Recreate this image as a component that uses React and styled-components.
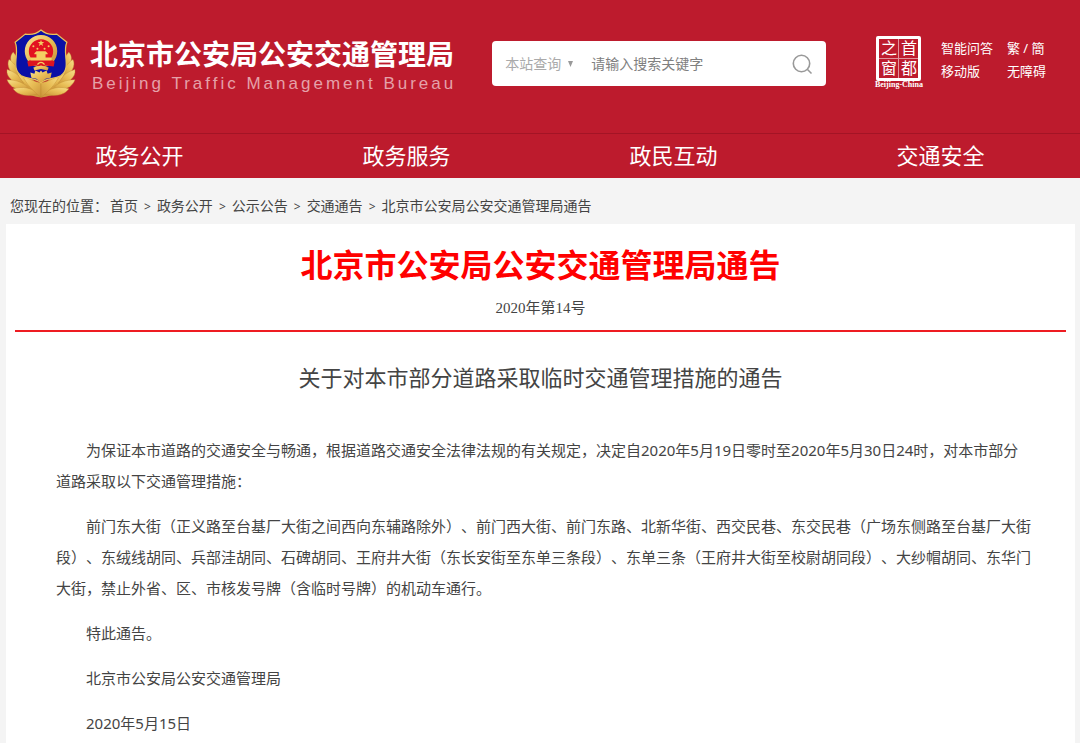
import styled, { createGlobalStyle } from "styled-components";

const GlobalStyle = createGlobalStyle`
* {
  box-sizing : border-box;
}
body {
  margin : 0;
  background-color : #f4f4f4;
  color : #444;
  font-family : "Noto Sans", "Noto Sans CJK SC", sans-serif;
  font-size : 14px;
  text-spacing-trim : space-all;
}
a {
  color : inherit;
  text-decoration : none;
}
`

// Header

const Header = styled.header`
background-color : #bd1b2d;
color : #fff;
`

const HeaderTop = styled.div`
display : flex;
align-items : center;
min-height : 133px;
padding : 0 34px 6px 6px;
@media only screen and (max-width : 860px){
  flex-wrap : wrap;
  row-gap : 12px;
  padding : 16px 6px;
}
`

const Brand = styled.a`
display : flex;
align-items : center;
column-gap : 14px;
`

const Emblem = styled.svg`
width : 70px;
height : 70px;
flex-shrink : 0;
`

const BrandText = styled.span`
padding-top : 4px;
`

const BrandName = styled.strong`
display : block;
font-size : 28px;
font-weight : 700;
line-height : 36px;
white-space : nowrap;
`

const BrandSub = styled.span`
display : block;
padding-left : 2px;
color : #e5a1a9;
font-family : "Liberation Sans", sans-serif;
font-size : 17px;
line-height : 24px;
letter-spacing : 3px;
white-space : nowrap;
`

const SearchForm = styled.form`
display : flex;
align-items : center;
flex : 0 1 330px;
height : 45px;
margin-left : 36px;
padding : 0 13px;
border-radius : 4px;
background-color : #fff;
`

const ScopeSelect = styled.select`
appearance : none;
width : 58px;
padding : 0;
border : 0;
background : none;
color : #aaa;
font-family : inherit;
font-size : 14px;
`

const ScopeArrow = styled.svg`
width : 7px;
height : 6px;
margin-left : 4px;
flex-shrink : 0;
`

const SearchInput = styled.input`
flex : 1;
min-width : 0;
margin-left : 17px;
padding : 0;
border : 0;
outline : 0;
background : none;
color : #444;
font-family : inherit;
font-size : 14px;
&::placeholder {
  color : #808080;
}
`

const SearchButton = styled.button`
display : flex;
padding : 0;
border : 0;
background : none;
cursor : pointer;
`

const Portal = styled.a`
display : flex;
flex-direction : column;
align-items : center;
margin-left : auto;
padding : 0 18px 2px 0;
`

const Seal = styled.span`
display : grid;
grid-template-columns : 1fr 1fr;
gap : 1px;
width : 45px;
height : 45px;
border : 3px solid #fff;
border-radius : 2px;
background-color : #e0939c;
`

const SealCell = styled.span`
background-color : #bd1b2d;
font-size : 16px;
line-height : 19px;
text-align : center;
`

const SealName = styled.span`
font-family : "Liberation Serif", serif;
font-size : 8px;
font-weight : 700;
line-height : 8px;
`

const QuickLinks = styled.nav`
display : grid;
grid-template-columns : auto auto;
column-gap : 14px;
padding-bottom : 7px;
font-size : 13px;
line-height : 23px;
white-space : nowrap;
`

const MainNav = styled.nav`
display : grid;
grid-template-columns : repeat(4, 1fr);
padding : 0 6px 2px;
border-top : 1px solid #a31425;
`

const NavLink = styled.a`
font-size : 22px;
line-height : 42px;
text-align : center;
`

// Content

const Breadcrumb = styled.nav`
display : flex;
flex-wrap : wrap;
column-gap : 2px;
padding : 11px 10px 0;
line-height : 34px;
`

const Crumbs = styled.ol`
display : flex;
flex-wrap : wrap;
margin : 0;
padding : 0;
list-style : none;
`

const Crumb = styled.li`
& + &::before {
  content : ">";
  padding : 0 6px;
  font-size : 12px;
}
`

const Article = styled.article`
margin : 0 5px 0 6px;
padding : 17px 9px 14px;
background-color : #fff;
`

const ArticleHead = styled.header`
padding-bottom : 12px;
border-bottom : 2px solid #ee1c22;
text-align : center;
`

const Title = styled.h1`
margin : 0;
color : #f00;
font-size : 32px;
font-weight : 700;
line-height : 48px;
`

const Issue = styled.p`
margin : 9px 0 0;
font-family : "Liberation Serif", "Noto Sans CJK SC", serif;
font-size : 15px;
line-height : 20px;
`

const Subject = styled.h2`
margin : 29px 0 42px;
font-size : 22px;
font-weight : 400;
line-height : 32px;
text-align : center;
`

const Content = styled.div`
padding : 0 34px 0 41px;
`

const Paragraph = styled.p`
margin : 0 0 14px;
font-size : 15px;
line-height : 31px;
text-indent : 2em;
`

const navItems = ["政务公开", "政务服务", "政民互动", "交通安全"];

const crumbs = ["首页", "政务公开", "公示公告", "交通通告", "北京市公安局公安交通管理局通告"];

const paragraphs = [
  "为保证本市道路的交通安全与畅通，根据道路交通安全法律法规的有关规定，决定自2020年5月19日零时至2020年5月30日24时，对本市部分道路采取以下交通管理措施：",
  "前门东大街（正义路至台基厂大街之间西向东辅路除外）、前门西大街、前门东路、北新华街、西交民巷、东交民巷（广场东侧路至台基厂大街段）、东绒线胡同、兵部洼胡同、石碑胡同、王府井大街（东长安街至东单三条段）、东单三条（王府井大街至校尉胡同段）、大纱帽胡同、东华门大街，禁止外省、区、市核发号牌（含临时号牌）的机动车通行。",
  "特此通告。",
  "北京市公安局公安交通管理局",
  "2020年5月15日",
];

const STAR = "M0-3.4L.8-1.1L3.2-1.1L1.3.4L2 2.7L0 1.3L-2 2.7L-1.3.4L-3.2-1.1L-.8-1.1Z";

// One side of the wreath, mirrored for the other
function Branch () {
  return(
    <g fill="url(#gold)" stroke="#c08a30" strokeWidth="0.4">
      <path d="M7 23L16 36L26 56L34.5 67.5C22 66 10 60 5 50L4 33Z" stroke="none" />
      <path d="M7 23C3 27 4 34 10 40C14 34 12 28 7 23Z" />
      <path d="M3 30C0 36 4 44 13 48C13 40 9 34 3 30Z" />
      <path d="M1 40C0 48 7 53 18 55C15 47 9 42 1 40Z" />
      <path d="M1 50C4 58 12 61 24 60C19 53 10 50 1 50Z" />
      <path d="M7 59C12 66 22 67 32 64C26 58 16 56 7 59Z" />
      <path d="M10 38C11 47 17 55 31 62C32 54 24 44 10 38Z" />
      <path d="M16 45C20 55 27 61 34.5 67.5L34.5 53C28 52 22 49 16 45Z" />
    </g>
  )
}

function PoliceEmblem () {
  return(
    <Emblem viewBox="0 0 69 69" aria-hidden="true">
      <defs>
        <linearGradient id="gold" x1="0" y1="0" x2="1" y2="1">
          <stop offset="0" stopColor="#f8e08c" />
          <stop offset="0.5" stopColor="#e8bd55" />
          <stop offset="1" stopColor="#c9933a" />
        </linearGradient>
      </defs>
      <Branch />
      <g transform="translate(69 0) scale(-1 1)">
        <Branch />
      </g>
      <path d="M34.5 1C39 5 44 6 50 5L60 13C55 24 65 38 54 46C47 50 39 48 34.5 53C30 48 22 50 15 46C4 38 14 24 9 13L19 5C25 6 30 5 34.5 1Z" fill="#0a10a6" stroke="#e9c45c" strokeWidth="1.2" />
      <path d="M24 43L28 44L29 41L33 43L34.5 41L36 43L40 41L41 44L45 43L44 48L39 49L34.5 53L30 49L25 48Z" fill="url(#gold)" />
      <circle cx="34.5" cy="22" r="14" fill="#e31320" stroke="url(#gold)" strokeWidth="4" />
      <path d="M21 32L25 30H44L48 32L47 37L39 36L34.5 38L30 36L22 37Z" fill="#dd1420" />
      <path d="M27 38L34.5 36L42 38L41 41L34.5 39.5L28 41Z" fill="url(#gold)" />
      <path d="M28 24L30 22H39L41 24V25H39V28H45V31H24V28H30V25H28Z" fill="#f4cf62" />
      <path d="M31 35Q34.5 31 38 35" fill="none" stroke="#f4cf62" strokeWidth="1.2" />
      <g fill="#f4cf62">
        <path d={STAR} transform="translate(34.5 14)" />
        <circle cx="27" cy="17" r="1" />
        <circle cx="31" cy="19.5" r="1" />
        <circle cx="38" cy="19.5" r="1" />
        <circle cx="42" cy="17" r="1" />
      </g>
    </Emblem>
  )
}

function App () {
  return(
    <>
      <GlobalStyle />
      <Header>
        <HeaderTop>
          <Brand href="#"> {/* Logo and bureau name */}
            <PoliceEmblem />
            <BrandText>
              <BrandName>北京市公安局公安交通管理局</BrandName>
              <BrandSub>Beijing Traffic Management Bureau</BrandSub>
            </BrandText>
          </Brand>
          <SearchForm role="search" onSubmit={(e) => e.preventDefault()}> {/* Search */}
            <ScopeSelect aria-label="搜索范围">
              <option>本站查询</option>
            </ScopeSelect>
            <ScopeArrow viewBox="0 0 7 6" aria-hidden="true">
              <path d="M1 0H6L3.5 6Z" fill="#999" />
            </ScopeArrow>
            <SearchInput type="text" placeholder="请输入搜索关键字" aria-label="搜索关键字" />
            <SearchButton type="submit" aria-label="搜索">
              <svg width="22" height="22" viewBox="0 0 22 22" fill="none" stroke="#999" strokeWidth="1.6">
                <circle cx="10.5" cy="10.5" r="8.2" />
                <path d="M16.5 16.5L20.5 20.5" />
              </svg>
            </SearchButton>
          </SearchForm>
          <Portal href="#"> {/* Capital portal seal */}
            <Seal>
              <SealCell>之</SealCell>
              <SealCell>首</SealCell>
              <SealCell>窗</SealCell>
              <SealCell>都</SealCell>
            </Seal>
            <SealName>Beijing-China</SealName>
          </Portal>
          <QuickLinks>
            <a href="#">智能问答</a>
            <a href="#">繁 / 簡</a>
            <a href="#">移动版</a>
            <a href="#">无障碍</a>
          </QuickLinks>
        </HeaderTop>
        <MainNav>
          {navItems.map((item) => (
            <NavLink href="#" key={item}>{item}</NavLink>
          ))}
        </MainNav>
      </Header>
      <main>
        <Breadcrumb>
          <span>您现在的位置：</span>
          <Crumbs>
            {crumbs.map((crumb) => (
              <Crumb key={crumb}><a href="#">{crumb}</a></Crumb>
            ))}
          </Crumbs>
        </Breadcrumb>
        <Article>
          <ArticleHead>
            <Title>北京市公安局公安交通管理局通告</Title>
            <Issue>2020年第14号</Issue>
          </ArticleHead>
          <Subject>关于对本市部分道路采取临时交通管理措施的通告</Subject>
          <Content>
            {paragraphs.map((text) => (
              <Paragraph key={text}>{text}</Paragraph>
            ))}
          </Content>
        </Article>
      </main>
    </>
  )
}

export default App;
